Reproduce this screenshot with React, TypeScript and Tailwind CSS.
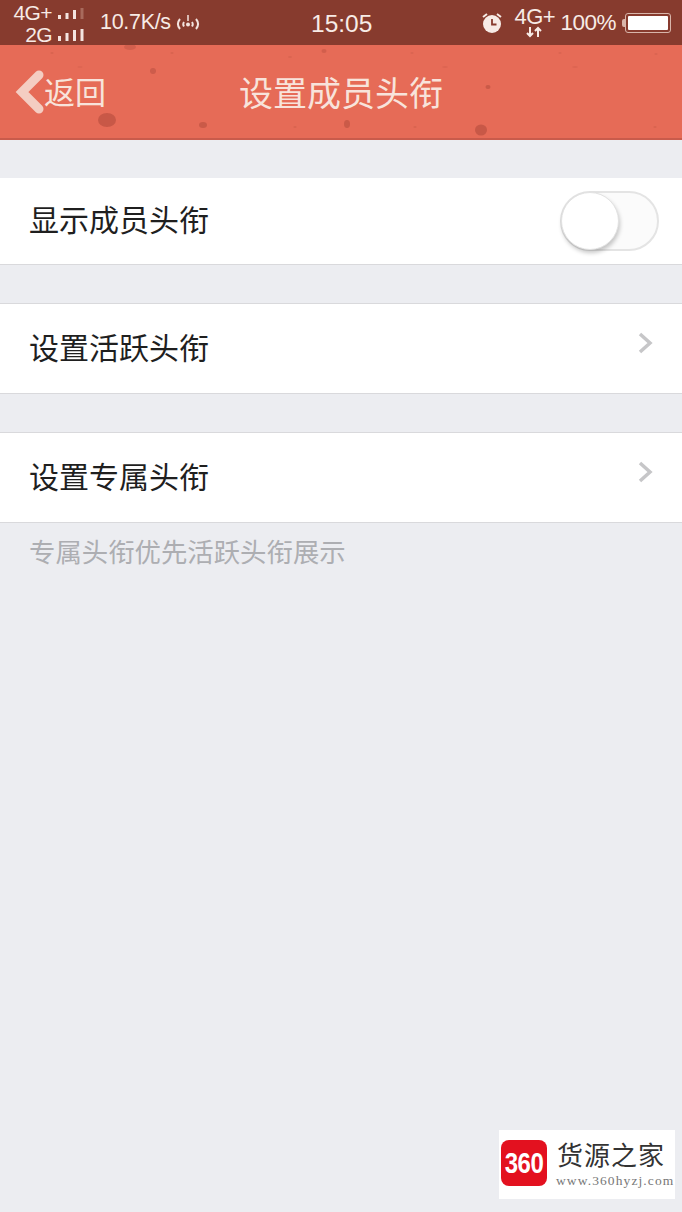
const CJK = "font-['Noto_Sans_CJK_SC','Liberation_Sans',sans-serif]";

// speckles on the nav bar texture
const SPOTS = [
  { cx: 107, cy: 75, rx: 9, ry: 7, o: 0.75 },
  { cx: 203, cy: 80, rx: 4, ry: 3, o: 0.7 },
  { cx: 153, cy: 26, rx: 3, ry: 3, o: 0.6 },
  { cx: 130, cy: 2, rx: 6, ry: 3, o: 0.45 },
  { cx: 347, cy: 79, rx: 3, ry: 4, o: 0.7 },
  { cx: 488, cy: 42, rx: 2.5, ry: 2, o: 0.7 },
  { cx: 481, cy: 85, rx: 6, ry: 5.5, o: 0.75 },
  { cx: 324, cy: 6, rx: 2.5, ry: 2, o: 0.5 },
  { cx: 52, cy: 8, rx: 1.5, ry: 1, o: 0.3 },
  { cx: 172, cy: 8, rx: 1.5, ry: 1, o: 0.3 },
  { cx: 290, cy: 12, rx: 2, ry: 1, o: 0.25 },
  { cx: 412, cy: 8, rx: 1.5, ry: 1, o: 0.25 },
  { cx: 560, cy: 8, rx: 1.5, ry: 1, o: 0.25 },
  { cx: 656, cy: 9, rx: 1.5, ry: 1, o: 0.25 },
  { cx: 80, cy: 22, rx: 2.5, ry: 1, o: 0.2 },
  { cx: 445, cy: 22, rx: 3, ry: 1, o: 0.2 },
  { cx: 575, cy: 22, rx: 3, ry: 1, o: 0.2 },
  { cx: 295, cy: 82, rx: 1.5, ry: 1, o: 0.3 },
  { cx: 415, cy: 82, rx: 1.5, ry: 1, o: 0.3 },
  { cx: 655, cy: 82, rx: 1.5, ry: 1, o: 0.3 },
];

function SignalBars({ dim, heights }: { dim?: boolean; heights: number[] }) {
  return (
    <svg width="27" height="12" viewBox="0 0 27 12">
      {heights.map((bar, i) => (
        <rect
          key={i}
          x={i * 7.5}
          y={12 - bar}
          width="3"
          height={bar}
          fill={dim && i === 3 ? "#a86a5c" : "#f3e4df"}
        />
      ))}
    </svg>
  );
}

function StatusBar() {
  return (
    <div className="h-[45px] bg-[#873b2e] flex items-center justify-between text-[#f7ebe6] relative font-['Liberation_Sans',sans-serif]">
      <div className="flex items-center">
        <div className="w-[85px] flex flex-col items-end text-[21px] tracking-[-0.6px] pt-[3px]">
          <div className="flex items-center gap-[6px] h-[22px] leading-[22px]">
            <span>4G+</span>
            <SignalBars dim heights={[4, 6, 9, 11]} />
          </div>
          <div className="flex items-center gap-[6px] h-[22px] leading-[22px]">
            <span>2G</span>
            <SignalBars heights={[5, 8, 11, 12]} />
          </div>
        </div>
        <span className="ml-[15px] text-[21.500px] tracking-[-0.3px]">10.7K/s</span>
        <svg className="ml-[4px] mt-[1px]" width="26" height="20" viewBox="0 0 26 20" fill="none" stroke="#f3e4df" strokeWidth="2">
          <path d="M5 6c-2.500 3-2.500 7 0 10M21 6c2.500 3 2.500 7 0 10M9 9c-1 1.500-1 3 0 4.500M17 9c1 1.500 1 3 0 4.500" />
          <circle cx="13" cy="11.500" r="2" fill="#f3e4df" stroke="none" />
          <path d="M13 2v6" strokeWidth="1.500" />
        </svg>
      </div>
      <span className="absolute left-[311px] top-[8px] text-[24.500px] leading-[32px]">15:05</span>
      <div className="flex items-center pr-[11px]">
        <svg className="-mr-[1px] ml-[2px]" width="24" height="24" viewBox="0 0 24 24">
          <path d="M3 6l4-3M21 6l-4-3" stroke="#f7ebe6" strokeWidth="2" fill="none" />
          <circle cx="12" cy="13" r="9" fill="#f7ebe6" />
          <path d="M12 8v5.500h4.500" stroke="#873b2e" strokeWidth="1.800" fill="none" />
        </svg>
        <div className="relative w-[44px] h-[40px] ml-[9px]">
          <span className="absolute left-[2px] top-[2px] text-[22px] leading-[24px] tracking-[-0.5px]">4G+</span>
          <svg className="absolute left-[14px] top-[23px]" width="16" height="12" viewBox="0 0 16 12" stroke="#f7ebe6" strokeWidth="2" fill="none">
            <path d="M4 1v9M1 7l3 3 3-3M12 11V2M9 5l3-3 3 3" />
          </svg>
        </div>
        <span className="ml-[4px] text-[22.500px] tracking-[-0.5px]">100%</span>
        <div className="ml-[6px] w-[3px] h-[8px] bg-[#d8b5aa] rounded-l-[2px]" />
        <div className="w-[46px] h-[20px] border border-[#d8b5aa] rounded-[3px] p-[2px]">
          <div className="w-full h-full bg-white rounded-[1px]" />
        </div>
      </div>
    </div>
  );
}

function NavBar() {
  return (
    <div className="h-[95px] bg-[#e66b57] border-b-2 border-[#c95b4b] flex items-center relative text-[#f8e3db]">
      <svg className="absolute left-0 top-0" width="682" height="93" viewBox="0 0 682 93">
        {SPOTS.map((s, i) => (
          <ellipse key={i} cx={s.cx} cy={s.cy} rx={s.rx} ry={s.ry} fill="#bd5242" opacity={s.o} />
        ))}
      </svg>
      <svg className="absolute left-[14px] top-[24px]" width="30" height="46" viewBox="0 0 30 46" fill="none">
        <path d="M25 6L8 23l17 17" stroke="#f4cdc2" strokeWidth="9" strokeLinecap="round" strokeLinejoin="miter" />
      </svg>
      <span className={`${CJK} absolute left-[44px] top-[24px] text-[31px] leading-[44px]`}>返回</span>
      <span className={`${CJK} w-full text-center text-[34px] leading-[44px]`}>设置成员头衔</span>
    </div>
  );
}

function Chevron() {
  return (
    <svg width="16" height="24" viewBox="0 0 16 24" fill="none">
      <path d="M3 3l10 9-10 9" stroke="#c6c6c8" strokeWidth="3.500" />
    </svg>
  );
}

function Row({ label, h, top, children }: { label: string; h: string; top?: boolean; children: React.ReactNode }) {
  return (
    <div className={`${h} bg-white flex items-center justify-between pl-[29px] pr-[24px] border-b border-[#d9d9dc] ${top ? "border-t" : ""}`}>
      <span className={`${CJK} pb-[6px] text-[30px] leading-[40px] text-[#1f1f1f]`}>{label}</span>
      {children}
    </div>
  );
}

function Toggle() {
  return (
    <div className="w-[99px] h-[60px] rounded-full bg-[#fbfbfb] border-2 border-[#e4e4e4] relative">
      <div className="absolute -left-[1px] -top-[1px] w-[58px] h-[58px] rounded-full bg-white border border-[#e2e2e2] shadow-[1px_3px_4px_rgba(0,0,0,0.22)]" />
    </div>
  );
}

export default function App() {
  return (
    <div className="w-[682px] h-[1212px] bg-[#ecedf1] relative overflow-hidden">
      <StatusBar />
      <NavBar />
      <div className="pt-[38px] flex flex-col">
        <Row label="显示成员头衔" h="h-[87px]">
          <div className="-mr-[1px]"><Toggle /></div>
        </Row>
        <div className="h-[38px]" />
        <Row label="设置活跃头衔" h="h-[91px]" top>
          <div className="-mt-[11px] mr-[5px]"><Chevron /></div>
        </Row>
        <div className="h-[38px]" />
        <Row label="设置专属头衔" h="h-[91px]" top>
          <div className="-mt-[11px] mr-[5px]"><Chevron /></div>
        </Row>
        <p className={`${CJK} pl-[29px] pt-[9px] text-[26.400px] leading-[38px] text-[#adaeb2]`}>专属头衔优先活跃头衔展示</p>
      </div>

      {/* watermark */}
      <div className="absolute left-[499px] top-[1130px] w-[176px] h-[69px] bg-white flex items-center">
        <div className="ml-[2px] mb-[4px] w-[46px] h-[46px] rounded-[8px] bg-[#e3111f] flex items-center justify-center text-white font-['Liberation_Sans',sans-serif] font-bold text-[24px] tracking-[-0.5px]">
          <span className="[transform:scaleY(1.200)]">360</span>
        </div>
        <div className="ml-[10px] flex flex-col">
          <span className={`${CJK} h-[26px] mb-[7px] text-[26px] leading-[26px] text-[#333333] tracking-[1px]`}>货源之家</span>
          <span className="font-['Liberation_Serif',serif] text-[13.500px] leading-[14px] text-[#777777] tracking-[1.100px] -ml-[1px] whitespace-nowrap">www.360hyzj.com</span>
        </div>
      </div>
    </div>
  );
}
